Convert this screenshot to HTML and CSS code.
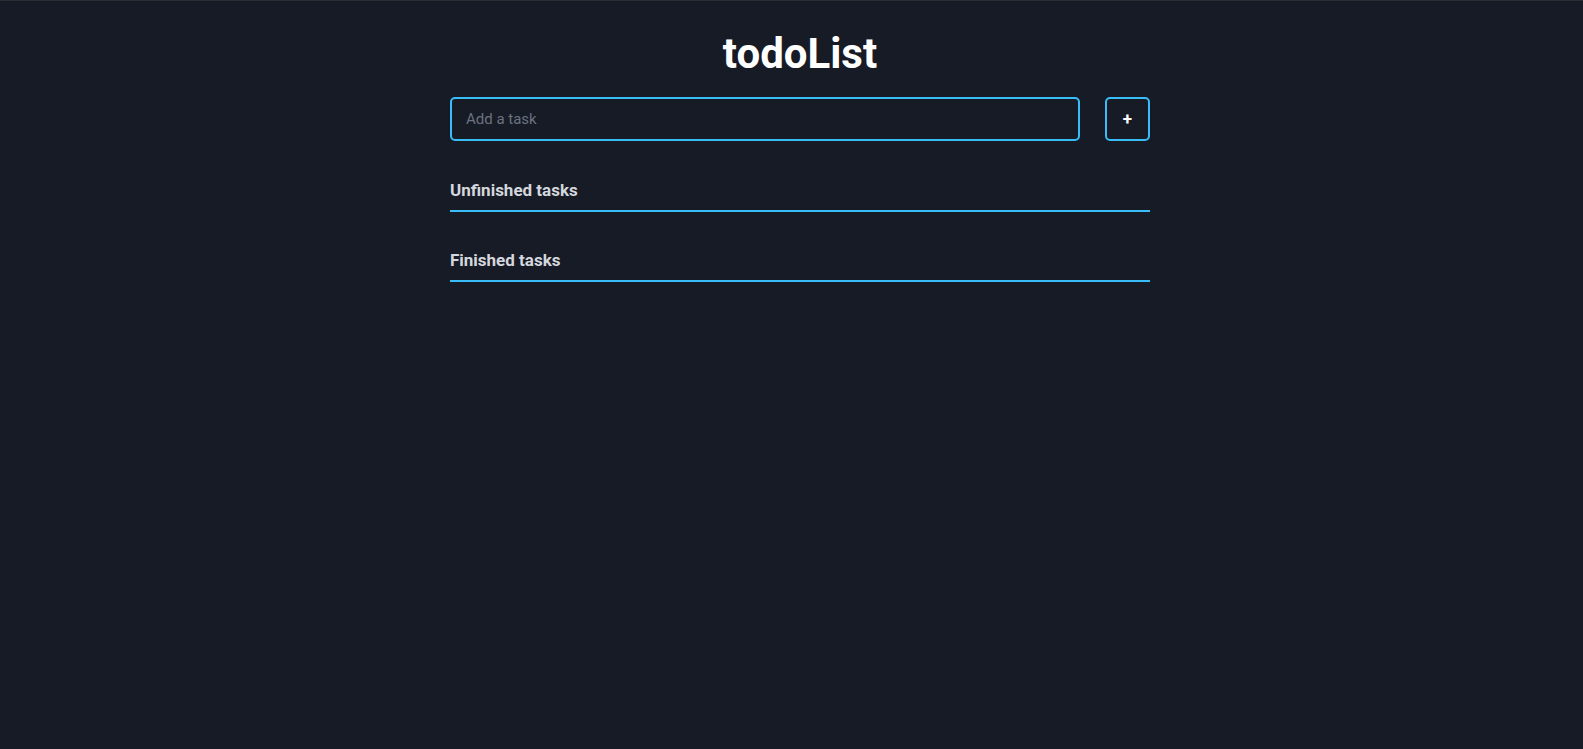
FILE: index.html
```html
<!DOCTYPE html>
<html lang="en">
<head>
<meta charset="utf-8">
<title>todoList</title>
<link rel="stylesheet" href="styles.css">
</head>
<body>
<div class="page">
  <main class="app">
    <h1 class="title">todoList</h1>
    <form class="add-form">
      <input class="task-input" type="text" placeholder="Add a task">
      <button class="add-btn" type="button">+</button>
    </form>
    <section class="section section-first">
      <h2 class="section-title">Unfinished tasks</h2>
    </section>
    <section class="section">
      <h2 class="section-title">Finished tasks</h2>
    </section>
  </main>
</div>
</body>
</html>
```

FILE: styles.css
```css
* { box-sizing: border-box; }
html, body {
  margin: 0;
  height: 100%;
}
body {
  background: #171b26;
  border-top: 1px solid #2c2e33;
  font-family: Roboto, "Liberation Sans", Arial, sans-serif;
  color: #fff;
}
.page {
  padding-left: 17px;
}
.app {
  width: 700px;
  margin: 0 auto;
  padding-top: 28px;
}
.title {
  margin: 0;
  font-size: 42px;
  line-height: 50px;
  font-weight: 700;
  text-align: center;
  color: #ffffff;
}
.add-form {
  display: flex;
  gap: 25px;
  margin-top: 18px;
}
.task-input {
  width: 90%;
  height: 44px;
  border: 2px solid #38bdf8;
  border-radius: 5px;
  background: #171b26;
  color: #e5e7eb;
  font-family: inherit;
  font-size: 15px;
  padding: 0 14px;
  outline: none;
}
.task-input::placeholder {
  color: #6b7280;
}
.add-btn {
  flex: 1;
  height: 44px;
  border: 2px solid #38bdf8;
  border-radius: 5px;
  background: #171b26;
  color: #ffffff;
  font-family: inherit;
  font-size: 17px;
  font-weight: 700;
  padding: 0;
}
.section {
  margin-top: 36px;
}
.section-first {
  margin-top: 37px;
}
.section-title {
  margin: 0;
  font-size: 17px;
  line-height: 24px;
  font-weight: 700;
  color: #d4d7dd;
  padding-bottom: 8px;
  border-bottom: 2px solid #38bdf8;
}
```
